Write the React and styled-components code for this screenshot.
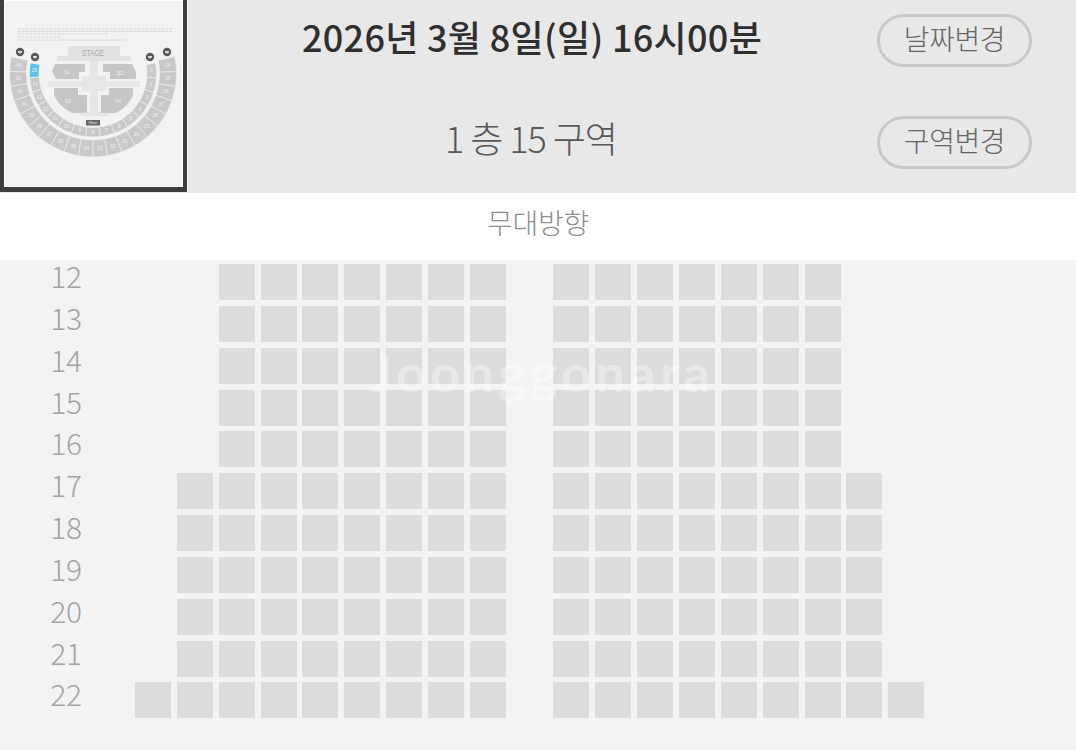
import React from "react";
import styled, { createGlobalStyle } from "styled-components";

const GlobalStyle = createGlobalStyle`
    html, body {
        margin: 0;
        padding: 0;
        background: #f3f3f3;
    }
    body {
        font-family: "Noto Sans CJK KR", "Noto Sans", sans-serif;
    }
`;

const Page = styled.div`
    width: 1076px;
    height: 750px;
    overflow: hidden;
    display: flex;
    flex-direction: column;
`;

const Header = styled.header`
    height: 193px;
    display: flex;
    background: #e8e8e8;
`;

const Thumb = styled.div`
    width: 187px;
    height: 192px;
    box-sizing: border-box;
    border: 4px solid #3d3d3d;
    border-top: 0;
    border-bottom-width: 5px;
    background: #f2f2f2;
    box-shadow: inset 0 0 0 1px #fff, 1px 0 0 #f6f6f6;
`;

const Info = styled.div`
    flex: 1;
    display: flex;
    flex-direction: column;
    gap: 49px;
    padding: 14px 44px 0 0;
`;

const InfoRow = styled.div`
    height: 53px;
    display: flex;
    align-items: center;
`;

const Title = styled.div`
    flex: 1;
    margin-top: ${(p) => (p.$sub ? "-12px" : "-10px")};
    margin-right: ${(p) => (p.$sub ? "2px" : "0")};
    text-align: center;
    white-space: nowrap;
    font-size: 36px;
    line-height: 48px;
    letter-spacing: ${(p) => (p.$sub ? "-1px" : "0.3px")};
    font-weight: ${(p) => (p.$sub ? 300 : 500)};
    color: ${(p) => (p.$sub ? "#585858" : "#2f2f2f")};
`;

const ChangeButton = styled.button`
    width: 155px;
    height: 53px;
    box-sizing: border-box;
    border: 3px solid #c8c8c8;
    border-radius: 27px;
    background: transparent;
    font-family: inherit;
    font-size: 28px;
    font-weight: 300;
    line-height: 40px;
    letter-spacing: -0.4px;
    color: #666;
    padding: 0 0 5px;
`;

const Direction = styled.div`
    height: 67px;
    padding-bottom: 10px;
    box-sizing: border-box;
    background: #fff;
    display: flex;
    align-items: center;
    justify-content: center;
    font-size: 28px;
    font-weight: 300;
    letter-spacing: -0.3px;
    color: #8f8f8f;
`;

const SeatArea = styled.div`
    position: relative;
    flex: 1;
    background: #f3f3f3;
    padding-top: 4px;
    display: flex;
    flex-direction: column;
    gap: 5.85px;
`;

const SeatRow = styled.div`
    display: flex;
    height: 36px;
`;

const RowLabel = styled.div`
    width: 132px;
    margin-right: 3px;
    margin-top: -4px;
    text-align: center;
    font-size: 30px;
    font-weight: 300;
    line-height: 30px;
    letter-spacing: -0.3px;
    color: #a3a3a3;
`;

const SeatGrid = styled.div`
    display: grid;
    grid-template-columns: repeat(19, 36px);
    column-gap: 5.85px;
`;

const Seat = styled.div`
    width: 36px;
    height: 36px;
    background: #dcdcdc;
    grid-column: ${(p) => p.$col + 1};
`;

const Watermark = styled.div`
    position: absolute;
    left: 370px;
    top: 82px;
    font-family: "Lato", sans-serif;
    font-size: 52px;
    font-weight: 700;
    line-height: 60px;
    letter-spacing: 4.4px;
    color: rgba(255, 255, 255, 0.34);
    white-space: nowrap;
`;

const outerLabels = [43, 42, 41, 40, 39, 38, 37, 36, 35, 34, 33, 32, 31, 30, 29, 28, 27, 26, 25, 24];
const innerLabels = [15, 14, 13, 12, 11, 10, 9, 8, 7, 6, 5, 4, 3, 2, 1];

const CX = 93;
const CY = 73.5;

// angle 0 is due left, 90 is straight down, 180 is due right
function point(r, deg) {
    const a = (deg * Math.PI) / 180;
    return [CX - r * Math.cos(a), CY + r * Math.sin(a)];
}

function sector(r0, r1, a0, a1) {
    const [x0, y0] = point(r1, a0);
    const [x1, y1] = point(r1, a1);
    const [x2, y2] = point(r0, a1);
    const [x3, y3] = point(r0, a0);
    return `M${x0} ${y0}A${r1} ${r1} 0 0 0 ${x1} ${y1}L${x2} ${y2}A${r0} ${r0} 0 0 1 ${x3} ${y3}Z`;
}

function Ring({ labels, r0, r1, start, end, active }) {
    const step = (end - start) / labels.length;
    return labels.map((label, i) => {
        const a0 = start + step * i;
        const [tx, ty] = point((r0 + r1) / 2, a0 + step / 2);
        return (
            <g key={label}>
                <path
                    d={sector(r0, r1, a0, a0 + step)}
                    fill={label === active ? "#5cc3e8" : "#c9c9c9"}
                    stroke="#f2f2f2"
                    strokeWidth="0.6"
                />
                <text x={tx} y={ty + 1.8} fontSize="5" textAnchor="middle" fill="#f0f0f0" fontFamily="Liberation Sans, sans-serif">
                    {label}
                </text>
            </g>
        );
    });
}

function Pin({ x, y }) {
    return (
        <g>
            <circle cx={x} cy={y} r="4.2" fill="#5a5a5a" />
            <path d={`M${x - 2} ${y - 1}h4v1.2l-2 1.6-2-1.6z`} fill="#ddd" />
        </g>
    );
}

function SeatMap() {
    const notes = [
        [18, 29, 172],
        [18, 31.5, 172],
        [18, 34, 108],
        [18, 37, 62],
        [18, 40, 127],
    ];
    return (
        <svg width="179" height="187" viewBox="4 0 179 187" style={{ display: "block" }}>
            {notes.map(([x, y, x2]) => (
                <line key={y} x1={x} y1={y} x2={x2} y2={y} stroke="#d6d6d6" strokeWidth="1" strokeDasharray="2 0.5 1 0.5" />
            ))}
            <path d="M68 46H120V56H131V61H57V56H68Z" fill="#e2e2e2" />
            <text x="82" y="56" fontSize="8.4" textLength="22" lengthAdjust="spacingAndGlyphs" fill="#a4a4a4" fontFamily="Liberation Sans, sans-serif">STAGE</text>
            <path d="M90 61H98V76H106V81H140V87H106V91H98V111H108V116H80V111H90V91H82V87H48V81H82V76H90Z" fill="#e6e6e6" />
            <path d="M55 64H85V72H79V79H56L52 71Z" fill="#c6c6c6" />
            <path d="M103 64H132L136 72V79H110V72H103Z" fill="#c6c6c6" />
            <path d="M54 88H78V95H87V113H72Q58 106 54 95Z" fill="#c6c6c6" />
            <path d="M133 88H109V95H101V113H116Q129 106 133 95Z" fill="#c6c6c6" />
            <text x="67" y="74" fontSize="5" textAnchor="middle" fill="#f0f0f0" fontFamily="Liberation Sans, sans-serif">S1</text>
            <text x="120" y="75" fontSize="5" textAnchor="middle" fill="#f0f0f0" fontFamily="Liberation Sans, sans-serif">S2</text>
            <text x="68" y="103" fontSize="5" textAnchor="middle" fill="#f0f0f0" fontFamily="Liberation Sans, sans-serif">S3</text>
            <text x="118" y="103" fontSize="5" textAnchor="middle" fill="#f0f0f0" fontFamily="Liberation Sans, sans-serif">S4</text>
            <Ring labels={outerLabels} r0={66.5} r1={83.5} start={-11.5} end={191.5} />
            <Ring labels={innerLabels} r0={54} r1={63.5} start={-9.5} end={189.5} active={15} />
            <rect x="86" y="120" width="14" height="5.5" fill="#666" />
            <text x="93" y="124.3" fontSize="3.8" textAnchor="middle" fill="#eee" fontFamily="Liberation Sans, sans-serif">Floor</text>
            <Pin x={20} y={52} />
            <Pin x={35} y={57} />
            <Pin x={150} y={57} />
            <Pin x={167} y={52} />
        </svg>
    );
}

function range(from, to) {
    const out = [];
    for (let i = from; i <= to; i++) out.push(i);
    return out;
}

const rows = [
    { no: 12, inset: 2 },
    { no: 13, inset: 2 },
    { no: 14, inset: 2 },
    { no: 15, inset: 2 },
    { no: 16, inset: 2 },
    { no: 17, inset: 1 },
    { no: 18, inset: 1 },
    { no: 19, inset: 1 },
    { no: 20, inset: 1 },
    { no: 21, inset: 1 },
    { no: 22, inset: 0 },
];

function App() {
    return (
        <Page>
            <GlobalStyle />
            <Header>
                <Thumb>
                    <SeatMap />
                </Thumb>
                <Info>
                    <InfoRow>
                        <Title>2026년 3월 8일(일) 16시00분</Title>
                        <ChangeButton>날짜변경</ChangeButton>
                    </InfoRow>
                    <InfoRow>
                        <Title $sub>1 층 15 구역</Title>
                        <ChangeButton>구역변경</ChangeButton>
                    </InfoRow>
                </Info>
            </Header>
            <Direction>무대방향</Direction>
            <SeatArea>
                {rows.map((row) => (
                    <SeatRow key={row.no}>
                        <RowLabel>{row.no}</RowLabel>
                        <SeatGrid>
                            {[...range(row.inset, 8), ...range(10, 18 - row.inset)].map((col) => (
                                <Seat key={col} $col={col} />
                            ))}
                        </SeatGrid>
                    </SeatRow>
                ))}
                <Watermark>Joonggonara</Watermark>
            </SeatArea>
        </Page>
    );
}

export default App;
